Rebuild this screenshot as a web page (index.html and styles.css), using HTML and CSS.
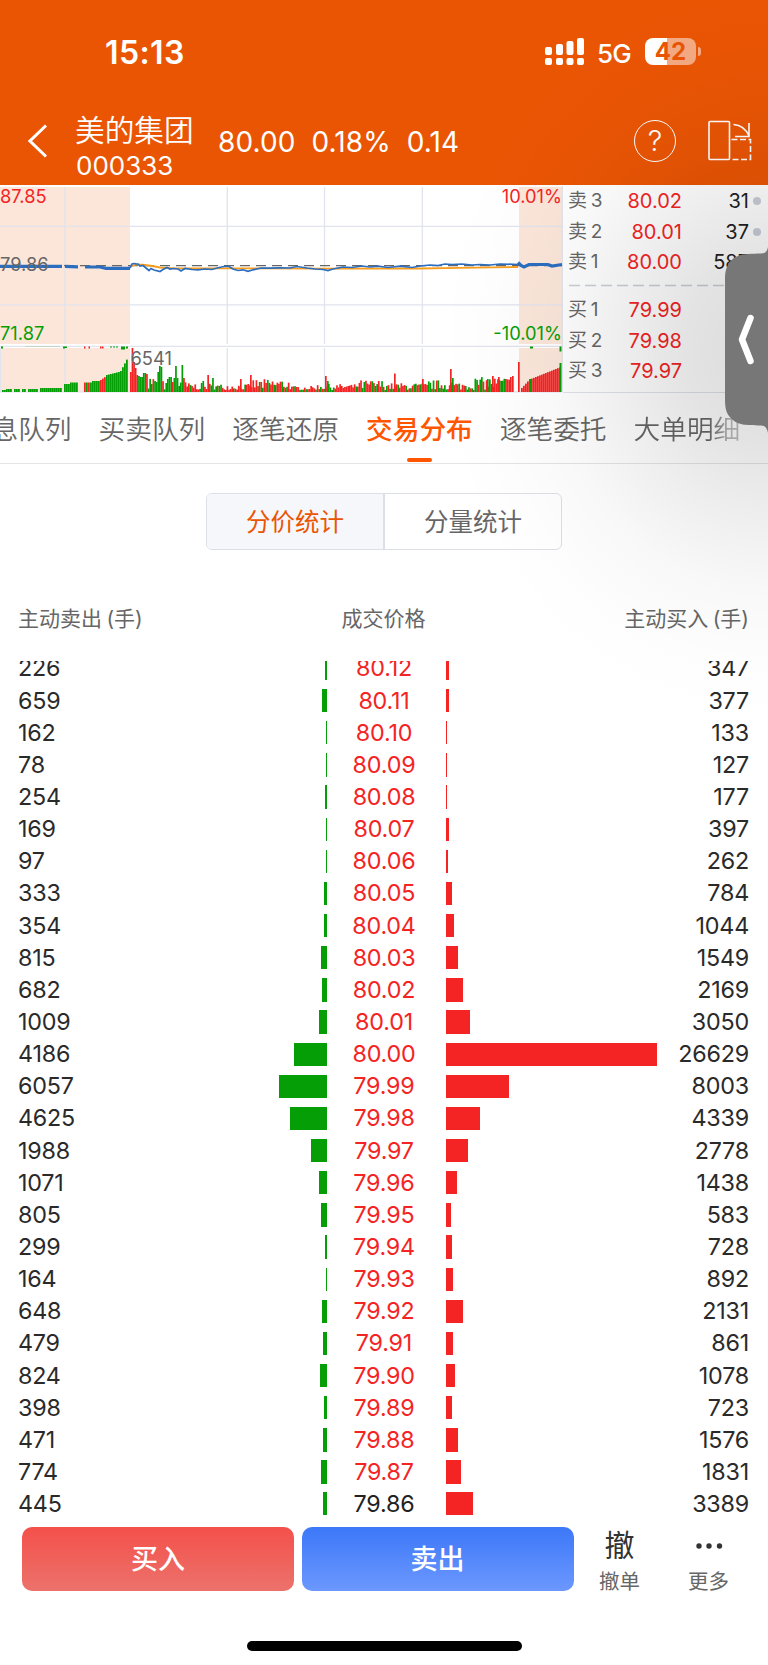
FILE: index.html
```html
<!DOCTYPE html>
<html lang="zh-CN">
<head>
    <meta charset="UTF-8">
    <meta name="viewport" content="width=device-width, initial-scale=1.0">
    <title>美的集团 000333</title>
    <link rel="stylesheet" href="styles.css">
</head>
<body>
    <header>
        <div class="status-bar">
            <span class="clock">15:13</span>
            <div class="status-right">
                <svg class="signal" width="40" height="28" viewBox="0 0 40 28" fill="#fff">
                    <rect x="0" y="9" width="7" height="8" rx="2"/>
                    <rect x="11" y="6" width="7" height="11" rx="2"/>
                    <rect x="21.500" y="3" width="7" height="14" rx="2"/>
                    <rect x="32" y="0" width="7" height="17" rx="2"/>
                    <rect x="0" y="20" width="7" height="7" rx="2"/>
                    <rect x="11" y="20" width="7" height="7" rx="2"/>
                    <rect x="21.500" y="20" width="7" height="7" rx="2"/>
                    <rect x="32" y="20" width="7" height="7" rx="2"/>
                </svg>
                <span class="network">5G</span>
                <span class="battery">42</span>
                <span class="battery-tip"></span>
            </div>
        </div>
        <nav class="title-bar">
            <svg class="back" width="20" height="34" viewBox="0 0 20 34" fill="none" stroke="#fff" stroke-width="3">
                <path d="M18 1.500 L2 17 L18 32.500"/>
            </svg>
            <div class="stock">
                <div class="stock-name">美的集团</div>
                <div class="stock-code">000333</div>
            </div>
            <div class="quote">
                <span>80.00</span>
                <span>0.18%</span>
                <span>0.14</span>
            </div>
            <span class="help">?</span>
            <svg class="rotate" width="44" height="42" viewBox="0 0 44 42" fill="none" stroke="#fff" stroke-width="1.600">
                <rect x="1" y="1.500" width="20.500" height="38" rx="1"/>
                <path d="M25.500 4.500 C33 5 38 9 41 16 M41 3 V16.500 H27"/>
                <path d="M23.500 19.500 H42.500 V39.500 H23.500" stroke-dasharray="6 2.500"/>
            </svg>
        </nav>
    </header>

    <section class="market">
        <svg class="chart" id="chart" width="563" height="208" viewBox="0 185 563 208">
            <g fill="#fce6da">
                <rect x="0" y="187" width="130" height="157"/>
                <rect x="0" y="348" width="130" height="44"/>
                <rect x="519" y="187" width="43" height="157"/>
                <rect x="519" y="348" width="43" height="44"/>
            </g>
            <g stroke="#e1e4ed" stroke-width="1.300">
                <path d="M65 187V344M227.300 187V344M324.500 187V344M422.300 187V344"/>
                <path d="M65 348V392M227.300 348V392M324.500 348V392M422.300 348V392"/>
                <path d="M0 226.300H562M0 304.800H562M0 346.300H562M0 391.800H562M0.500 348V392M562.300 186V392"/>
            </g>
            <path d="M0 265.700H562" stroke="#666" stroke-width="1.300" stroke-dasharray="10 6"/>
            <path d="M130 266.500L137 264.500L145 265L152 266L160 267.500L175 268.300H227L324 268.700L420 268.500L460 267.800L518 267" fill="none" stroke="#f99d1c" stroke-width="1.800"/>
            <path d="M0 266.300H62M65 266.400L78 266.900M85 267H100L106 268.300H130" fill="none" stroke="#2b6ec0" stroke-width="3.200"/>
            <path d="M130 268L132 264L134 263.500L136 263.800L138 264L140 266L143 265.500L146 268L149 270.500L151 268.500L154 270L160 271.500L163 269.500L167 267.500L170 269L174 268.500L178 269L181 271L185 268.500L192 269.500L198 269.800L205 269L212 269.500L219 267.500L224 266.500L229 266.500L233 269L238 270.500L243 269.800L248 271.300L253 269.800L261 268L270 268.200L280 267.800L290 268L297 266.500L307 268L315 269L323 269.500L328 270.500L333 269L343 267L352 267.500L362 266L370 267L378 266.200L388 267.500L400 266.200L412 267.500L420 266L430 265L438 265.500L445 264L452 264.500L462 264L472 265L480 264.500L490 265L500 264L518 264.500" fill="none" stroke="#2b6ec0" stroke-width="1.700"/>
            <path d="M518 262.500L521 265.500L524 267L529 264.500L548 264.500L552 266L562 264.500" fill="none" stroke="#2b6ec0" stroke-width="3.200"/>
            <g id="volume"></g>
            <g class="chart-text">
                <text x="0" y="203" fill="#f42424">87.85</text>
                <text x="0" y="271" fill="#666">79.86</text>
                <text x="0" y="339.500" fill="#069e06">71.87</text>
                <text x="562" y="203" fill="#f42424" text-anchor="end">10.01%</text>
                <text x="562" y="339.500" fill="#069e06" text-anchor="end">-10.01%</text>
                <text x="130.500" y="365" fill="#666">6541</text>
            </g>
        </svg>
        <div class="order-book">
            <div class="order"><span>卖 3</span><b>80.02</b><em>31</em><i class="dot"></i></div>
            <div class="order"><span>卖 2</span><b>80.01</b><em>37</em><i class="dot"></i></div>
            <div class="order"><span>卖 1</span><b>80.00</b><em>587</em><i></i></div>
            <svg class="order-split" width="206" height="18" viewBox="0 0 206 18">
                <path d="M6 8.500H206" stroke="#c9cdd6" stroke-width="1.500" stroke-dasharray="11 5"/>
            </svg>
            <div class="order"><span>买 1</span><b>79.99</b></div>
            <div class="order"><span>买 2</span><b>79.98</b></div>
            <div class="order"><span>买 3</span><b>79.97</b></div>
        </div>
    </section>

    <nav class="tabs">
        <span>息队列</span>
        <span>买卖队列</span>
        <span>逐笔还原</span>
        <span class="active">交易分布</span>
        <span>逐笔委托</span>
        <span>大单明细</span>
    </nav>

    <div class="segment">
        <span class="selected">分价统计</span>
        <span>分量统计</span>
    </div>

    <div class="list-head">
        <span>主动卖出 (手)</span>
        <span>成交价格</span>
        <span>主动买入 (手)</span>
    </div>
    <div class="list" id="list"></div>

    <footer>
        <div class="actions">
            <button class="buy">买入</button>
            <button class="sell">卖出</button>
            <div class="action">
                <span class="action-icon">撤</span>
                <span>撤单</span>
            </div>
            <div class="action">
                <svg class="action-icon" width="30" height="36" viewBox="0 0 30 36" fill="#333">
                    <circle cx="5" cy="19" r="2.700"/>
                    <circle cx="15" cy="19" r="2.700"/>
                    <circle cx="25.500" cy="19" r="2.700"/>
                </svg>
                <span>更多</span>
            </div>
        </div>
        <div class="home-bar"></div>
    </footer>

    <div class="shade"></div>
    <svg class="drawer" width="43" height="186" viewBox="0 0 43 186">
        <path d="M43 0 C42 5 40 6.500 36 6.500 C22 7 10 6 3.500 17 C0.500 22 0 26 0 34 V152 C0 160 1 165 4 169 C12 179 20 178 36 178.500 C40 178.500 42 181 43 186Z" fill="#777"/>
        <path d="M25.500 71 L17 92.500 L25.500 114" fill="none" stroke="#fff" stroke-width="6.500" stroke-linecap="round" stroke-linejoin="round"/>
    </svg>

    <script src="script.js"></script>
</body>
</html>
```

FILE: styles.css
```css
* {
    box-sizing: border-box;
}

body {
    position: relative;
    width: 768px;
    height: 1665px;
    margin: 0;
    overflow: hidden;
    background: #fff;
    color: #2a2a2a;
    font-family: Inter, "Noto Sans CJK SC", sans-serif;
}

header {
    height: 185px;
    background: #ea5504;
    color: #fff;
}

.status-bar {
    display: flex;
    justify-content: space-between;
    height: 104px;
    padding: 0 67px 0 105px;
}

.clock {
    font-size: 32px;
    font-weight: 600;
    line-height: 106px;
    letter-spacing: 0.4px;
}

.status-right {
    display: flex;
    align-items: center;
    height: 103px;
}

.network {
    width: 34px;
    margin: 3px 14px 0 12px;
    font-size: 26px;
    font-weight: 450;
    letter-spacing: -0.8px;
    white-space: nowrap;
}

.battery {
    width: 51px;
    height: 27px;
    border-radius: 8px;
    background: linear-gradient(90deg, #fff 43%, #f4aa82 43%);
    color: #ea5504;
    font-size: 24px;
    font-weight: 700;
    line-height: 27px;
    text-align: center;
}

.battery-tip {
    width: 3px;
    height: 9px;
    margin-left: 2px;
    border-radius: 0 4px 4px 0;
    background: #f4aa82;
}

.title-bar {
    display: flex;
    align-items: center;
    height: 74px;
    padding: 0 16px 0 28px;
}

.stock {
    width: 117px;
    margin: 0 26px 0 28px;
    padding-top: 9px;
}

.stock-name {
    margin-left: -1px;
    font-size: 29.7px;
    font-weight: 350;
    line-height: 40px;
    white-space: nowrap;
}

.stock-code {
    font-size: 26px;
    line-height: 31px;
}

.quote {
    display: flex;
    flex: 1;
    gap: 16px;
    margin-left: -1px;
    padding-top: 1px;
    font-size: 28px;
    font-weight: 375;
    letter-spacing: 0.1px;
}

.help {
    width: 42px;
    height: 42px;
    margin-right: 32px;
    border: 1.500px solid #fff;
    border-radius: 50%;
    font-size: 29px;
    font-weight: 300;
    line-height: 39px;
    text-align: center;
}

.market {
    display: flex;
    height: 208px;
}

.chart-text {
    font-size: 18.3px;
}

.order-book {
    width: 205px;
    padding-top: 1px;
    border-bottom: 1px solid #dfe2ea;
}

.order {
    display: flex;
    align-items: center;
    height: 30.4px;
    padding-left: 5px;
    color: #666;
    font-size: 20px;
    line-height: 30px;
}

.order span {
    width: 42px;
    font-size: 19px;
    word-spacing: -1.5px;
    white-space: nowrap;
}

.order b {
    width: 72px;
    color: #f42424;
    font-weight: 400;
    text-align: right;
}

.order em {
    width: 67px;
    color: #222;
    font-style: normal;
    text-align: right;
}

.order i {
    width: 8px;
    height: 8px;
    margin-left: 4px;
    border-radius: 50%;
}

.order .dot {
    background: #c9cdd6;
}

.order-split {
    display: block;
}

.tabs {
    display: flex;
    gap: 27px;
    height: 71px;
    margin-left: -8.5px;
    overflow: hidden;
    border-bottom: 1px solid #e4e4e6;
    color: #666;
    font-size: 26.700px;
    font-weight: 350;
    line-height: 73px;
    white-space: nowrap;
}

.tabs .active {
    color: #ff5500;
    font-weight: 500;
}

.tabs .active::after {
    content: "";
    display: block;
    width: 25px;
    height: 4px;
    margin: -8px auto 0;
    border-radius: 2px;
    background: #ff5500;
}

.tabs span:last-child {
    background: linear-gradient(90deg, #666 70%, #bbb 90%);
    background-clip: text;
    color: transparent;
}

.segment {
    display: flex;
    width: 356px;
    height: 57px;
    margin: 29px auto 0 206px;
    overflow: hidden;
    border: 1.500px solid #dcdfe7;
    border-radius: 6px;
    color: #666;
    font-size: 24.500px;
    line-height: 56px;
    text-align: center;
}

.segment span {
    flex: 1;
}

.segment .selected {
    border-right: 2px solid #dcdfe7;
    background: #f6f7fa;
    color: #ea5504;
}

.list-head {
    display: grid;
    grid-template-columns: 1fr 1fr 1fr;
    height: 62px;
    margin-top: 49px;
    padding: 0 19px 0 18px;
    color: #666;
    font-size: 21px;
    line-height: 40px;
    word-spacing: -1.5px;
}

.list-head span:nth-child(2) {
    text-align: center;
}

.list-head span:nth-child(3) {
    text-align: right;
}

.list {
    height: 854px;
    overflow: hidden;
}

.row {
    display: grid;
    grid-template-columns: 151px 158px 114px 5px 210px 93px;
    align-items: center;
    height: 32.150px;
    padding: 0 19px 0 18px;
    font-size: 23.300px;
    letter-spacing: -0.2px;
    line-height: 32px;
}

/* the list is scrolled a little */
.row:first-child {
    margin-top: -8.6px;
}

.price {
    color: #f42424;
    text-align: center;
}

.price.flat {
    color: #222;
}

.bar {
    height: 23.300px;
}

.bar.out {
    justify-self: end;
    background: #069e06;
}

.bar.in {
    grid-column: 5;
    background: #f42424;
}

.amount-in {
    text-align: right;
}

.actions {
    display: flex;
    height: 126px;
    padding: 12px 0 0 22px;
}

.actions button {
    flex: none;
    width: 272px;
    height: 64px;
    margin-right: 7.5px;
    padding: 2px 0 0;
    border: none;
    border-radius: 10px;
    color: #fff;
    font-family: inherit;
    font-size: 27px;
    font-weight: 500;
    line-height: 62px;
}

.buy {
    background: linear-gradient(#f4504a, #ec726c);
}

.sell {
    background: linear-gradient(#3c78f8, #6c98fe);
}

.action {
    display: flex;
    flex: none;
    flex-direction: column;
    align-items: center;
    width: 89px;
    margin-left: -6px;
    margin-right: 6px;
    color: #666;
    font-size: 20.5px;
    line-height: 37px;
}

.action-icon {
    color: #333;
    font-size: 30px;
    line-height: 36px;
}

.home-bar {
    width: 275px;
    height: 10px;
    margin: 0 auto;
    border-radius: 5px;
    background: #000;
}

/* shadow cast by the side drawer handle */
.shade {
    position: absolute;
    top: 0;
    right: 0;
    width: 400px;
    height: 800px;
    background: radial-gradient(ellipse 330px 370px at 400px 350px, rgba(0, 0, 0, 0.14), rgba(0, 0, 0, 0.11) 25%, rgba(0, 0, 0, 0.065) 45%, rgba(0, 0, 0, 0.027) 65%, rgba(0, 0, 0, 0.008) 85%, transparent);
}

.drawer {
    position: absolute;
    top: 247px;
    right: 0;
}
```

FILE: script.js
```javascript
// [sold, price, bought]
const deals = [
    [226, '80.12', 347], [659, '80.11', 377], [162, '80.10', 133],
    [78, '80.09', 127], [254, '80.08', 177], [169, '80.07', 397],
    [97, '80.06', 262], [333, '80.05', 784], [354, '80.04', 1044],
    [815, '80.03', 1549], [682, '80.02', 2169], [1009, '80.01', 3050],
    [4186, '80.00', 26629], [6057, '79.99', 8003], [4625, '79.98', 4339],
    [1988, '79.97', 2778], [1071, '79.96', 1438], [805, '79.95', 583],
    [299, '79.94', 728], [164, '79.93', 892], [648, '79.92', 2131],
    [479, '79.91', 861], [824, '79.90', 1078], [398, '79.89', 723],
    [471, '79.88', 1576], [774, '79.87', 1831], [445, '79.86', 3389]
];
const maxDeal = 26629;
const barWidth = v => (v / maxDeal * 211).toFixed(2);

document.getElementById('list').innerHTML = deals.map(([out, price, inn]) => `
    <div class="row">
        <span>${out}</span>
        <div class="bar out" style="width: ${barWidth(out)}px"></div>
        <span class="price${price === '79.86' ? ' flat' : ''}">${price}</span>
        <div class="bar in" style="width: ${barWidth(inn)}px"></div>
        <span class="amount-in">${inn}</span>
    </div>`).join('');

const RED = '#f42424';
const GREEN = '#069e06';
const bottom = 392;
let bars = '';

function addBar(x, h, color, w = 1.7, y = bottom - h) {
    bars += `<rect x="${x.toFixed(1)}" y="${y.toFixed(1)}" width="${w}" height="${h.toFixed(1)}" fill="${color}"/>`;
}

// opening auction
const openGaps = [[11, 13], [20, 22], [26, 28], [37, 39], [61, 63], [77, 83]];
for (let x = 2; x < 128; x += 2) {
    if (openGaps.some(([a, b]) => x >= a && x < b)) continue;
    let h = x < 5 ? 2 : x < 40 ? 3 : x < 64 ? 4 : x < 70 ? 8 : x < 92 ? 9.5 : x < 100 ? 11 : 0;
    if (x >= 100) h = x < 106 ? 12 + (x - 100) * 0.7 : x < 120 ? 17 + (x - 106) * 0.25 : 21 + (x - 120) * 1.9;
    addBar(x, h, (x >= 83 && x < 90 && x % 4 === 0) || (x >= 99 && x < 105) ? RED : GREEN, 1.8);
}

// continuous trading, one bar per minute
const peaks = {
    0: 20, 1: 44, 2: 30, 3: 24, 4: 17, 5: 16, 6: 15, 7: 15, 8: 19, 9: 19, 10: 18, 13: 8, 15: 11,
    16: 10, 17: 20, 18: 26, 19: 25, 22: 9, 23: 13, 24: 15, 25: 15, 27: 14, 28: 26, 29: 14,
    32: 27, 33: 14, 45: 11, 48: 17, 51: 14
};
let seed = 7;
function rand() {
    seed = (seed * 16807) % 2147483647;
    return seed / 2147483647;
}
for (let i = 0; i < 236; i++) {
    const r = rand();
    // one entry per stretch of minutes: [last minute, average height]
    const base = [[35, 12], [50, 7], [75, 6], [100, 11], [115, 4], [140, 6], [160, 10], [185, 7], [200, 10], [212, 8], [236, 13]]
        .find(s => i < s[0])[1];
    const h = i in peaks ? peaks[i] : 2 + r * base;
    const green = i < 2 || (i > 4 && i < 33) ? rand() < 0.75 : rand() < 0.35;
    addBar(130 + i * 1.61, h, i === 1 ? RED : green ? GREEN : RED);
}
[[240, 13], [250, 17], [325, 16], [394, 18.5], [422, 13], [450, 23], [492, 16], [498, 15], [510, 15], [512, 16], [518, 30]]
    .forEach(([x, h]) => addBar(x, h, RED));
[[452, 14], [327, 11], [487, 13]].forEach(([x, h]) => addBar(x, h, GREEN));

// closing auction
for (let x = 521; x < 560; x += 2) {
    const h = x < 530 ? 4 + (x - 521) * 1.1 : 13 + (x - 530) * 0.4;
    addBar(x, h, RED, 1.8);
}
addBar(529.5, 13, GREEN);
addBar(559.5, 29, GREEN, 2);

// unmatched volume, hanging from the top edge
[[1, 2], [63, 2], [65, 1.5], [110, 1], [113, 1], [116, 1], [121, 3], [123, 3], [126, 2]]
    .forEach(([x, h]) => addBar(x, h, GREEN, 2, 346.5));
[[84, 2], [88.5, 2], [100, 2], [102, 2]].forEach(([x, h]) => addBar(x, h, RED, 1.5, 346.5));
addBar(25, 0.5, '#a5c99b', 35, 346.5);
addBar(530, 2, GREEN, 3, 346.5);
addBar(559.5, 5, GREEN, 2, 346.5);

document.getElementById('volume').innerHTML = bars;
```
